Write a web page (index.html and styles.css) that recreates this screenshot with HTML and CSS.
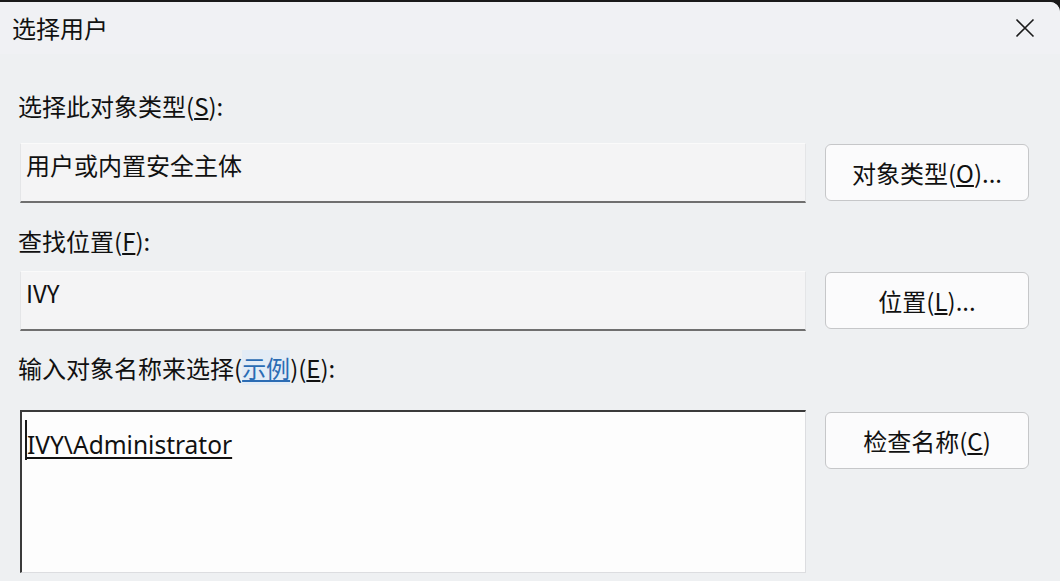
FILE: index.html
```html
<!DOCTYPE html>
<html lang="zh-CN">
<head>
<meta charset="utf-8">
<title>选择用户</title>
<link rel="stylesheet" href="styles.css">
</head>
<body>
<div class="dialog">
  <div class="titlebar">
    <span class="title">选择用户</span>
    <span class="close" aria-label="关闭">
      <svg width="20" height="20" viewBox="0 0 20 20"><path d="M1.5 1.5 L18.5 18.5 M18.5 1.5 L1.5 18.5" stroke="#1b1b1b" stroke-width="1.6" fill="none"/></svg>
    </span>
  </div>
  <div class="content">
    <div class="label l1">选择此对象类型(<u>S</u>):</div>
    <div class="row r1">
      <div class="field">用户或内置安全主体</div>
      <div class="btn">对象类型(<u>O</u>)...</div>
    </div>
    <div class="label l2">查找位置(<u>F</u>):</div>
    <div class="row r2">
      <div class="field">IVY</div>
      <div class="btn">位置(<u>L</u>)...</div>
    </div>
    <div class="label l3">输入对象名称来选择(<a class="link">示例</a>)(<u>E</u>):</div>
    <div class="row r3">
      <div class="textarea"><span class="caret"></span><span class="entry">IVY\Administrator</span></div>
      <div class="btn">检查名称(<u>C</u>)</div>
    </div>
  </div>
</div>
</body>
</html>
```
FILE: styles.css
```css
* { box-sizing: border-box; }
html, body {
  margin: 0;
  padding: 0;
  background: #1a1a1a;
  width: 1060px;
  height: 581px;
  overflow: hidden;
}
.dialog {
  margin-top: 2px;
  height: 579px;
  background: #eef0f2;
  border-top-right-radius: 10px;
  font-family: "Noto Sans CJK SC", "Noto Sans", sans-serif;
  font-size: 24px;
  color: #111;
}
.titlebar {
  height: 52px;
  display: flex;
  align-items: center;
  justify-content: space-between;
  padding: 0 25px 0 12px;
  background: #f0f1f4;
  border-top-right-radius: 10px;
}
.title { line-height: 26px; }
.close { display: flex; width: 20px; height: 20px; }
.content { padding: 0 31px 0 18px; }
.label { line-height: 26px; height: 26px; white-space: nowrap; }
.label u { text-underline-offset: 2px; }
.l1 { margin-top: 39px; }
.l2 { margin-top: 25px; }
.l3 { margin-top: 24px; }
.row {
  display: flex;
  align-items: flex-start;
  gap: 19px;
  padding-left: 2px;
}
.r1 { margin-top: 24px; }
.r2 { margin-top: 17px; }
.r3 { margin-top: 29px; }
.field {
  width: 786px;
  height: 60px;
  background: #f4f4f5;
  border-top: 1px solid #fafafa;
  border-left: 1px solid #e4e5e7;
  border-right: 1px solid #e4e5e7;
  border-bottom: 2px solid #6f6f6f;
  padding: 8px 0 0 5px;
  line-height: 26px;
}
.btn {
  margin-top: 1px;
  width: 204px;
  height: 57px;
  background: #fbfbfc;
  border: 1px solid #c6c7c9;
  border-radius: 6px;
  display: flex;
  align-items: center;
  justify-content: center;
  line-height: 26px;
  white-space: nowrap;
}
.btn u { text-underline-offset: 2px; }
.r3 .btn { margin-top: 2px; }
.textarea {
  width: 786px;
  height: 163px;
  background: #fdfdfd;
  border-top: 2px solid #3a3a3a;
  border-left: 2px solid #3a3a3a;
  border-right: 1px solid #dcdde0;
  border-bottom: 1px solid #dcdde0;
  padding: 19px 0 0 3px;
  display: flex;
  align-items: flex-start;
}
.caret {
  width: 2px;
  height: 40px;
  margin-top: -11px;
  background: #1a1a1a;
  flex: none;
}
.entry {
  font-family: "Noto Sans", "Open Sans", sans-serif;
  font-size: 24.5px;
  line-height: 28px;
  text-decoration: underline;
  text-underline-offset: 3px;
}
.link {
  color: #2b6cb4;
  text-decoration: underline;
  text-underline-offset: 2px;
  background: #e3ecf6;
}
```
